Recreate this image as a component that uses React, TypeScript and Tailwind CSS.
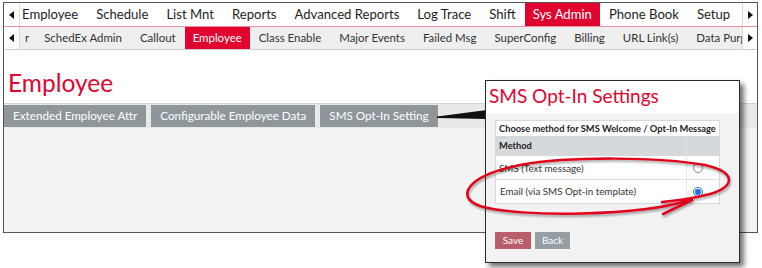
import React from "react";

const topItems = [
	"Employee",
	"Schedule",
	"List Mnt",
	"Reports",
	"Advanced Reports",
	"Log Trace",
	"Shift",
	"Sys Admin",
	"Phone Book",
	"Setup",
];

const subItems = [
	"SchedEx Admin",
	"Callout",
	"Employee",
	"Class Enable",
	"Major Events",
	"Failed Msg",
	"SuperConfig",
	"Billing",
	"URL Link(s)",
	"Data Purge",
];

function LeftArrow() {
	return (
		<span className="block h-0 w-0 border-y-[4px] border-y-transparent border-r-[5px] border-r-[#111]" />
	);
}

function RightArrow() {
	return (
		<span className="block h-0 w-0 border-y-[4px] border-y-transparent border-l-[5px] border-l-[#111]" />
	);
}

function Radio({ checked }: { checked?: boolean }) {
	if (checked) {
		return (
			<span className="flex h-[10px] w-[10px] items-center justify-center rounded-full border border-[#1f6fe5] bg-white">
				<span className="h-[6px] w-[6px] rounded-full bg-[#1f6fe5]" />
			</span>
		);
	}
	return (
		<span className="block h-[10px] w-[10px] rounded-full border border-[#8a8a8a] bg-white" />
	);
}

function SmsOptInDialog() {
	return (
		<div className="absolute left-[485px] top-[80px] flex h-[183px] w-[255px] flex-col border border-[#2b2b2b] bg-[#f2f2f2] shadow-[4px_4px_5px_rgba(0,0,0,0.55)]">
			<div className="h-[32px] bg-white px-[3px] pt-[3px] text-[19px] leading-[24px] text-[#e1042f]">
				SMS Opt-In Settings
			</div>
			<div className="px-[9px] pt-[7px]">
				<div className="w-[225px] border border-[#d8d8d8] bg-white text-[9.3px] text-[#222]">
					<div className="h-[15px] pl-[3px] font-bold leading-[15px]">
						Choose method for SMS Welcome / Opt-In Message
					</div>
					<div className="flex h-[20px] bg-[#d6d9db] font-bold leading-[20px]">
						<div className="flex-1 border-r border-[#e4e4e4] pl-[3px]">Method</div>
						<div className="w-[32px]" />
					</div>
					<div className="flex h-[24px] border-b border-[#dedede] text-[9.8px] leading-[24px] text-[#333]">
						<div className="flex-1 border-r border-[#e4e4e4] pl-[3px]">SMS (Text message)</div>
						<div className="flex w-[32px] items-center pl-[6px]">
							<Radio />
						</div>
					</div>
					<div className="flex h-[23px] text-[9.8px] leading-[23px] text-[#333]">
						<div className="flex-1 border-r border-[#e4e4e4] pl-[4px]">
							Email (via SMS Opt-in template)
						</div>
						<div className="flex w-[32px] items-center pl-[6px]">
							<Radio checked />
						</div>
					</div>
				</div>
				<div className="mt-[28px] flex gap-[4px] text-[10px] leading-[17px] text-white">
					<button className="h-[17px] w-[36px] bg-[#b95d6c]">Save</button>
					<button className="h-[17px] w-[35px] bg-[#979ea3]">Back</button>
				</div>
			</div>
		</div>
	);
}

export default function App() {
	return (
		<div className="relative h-[268px] w-[762px] overflow-hidden bg-white [font-family:Lato,sans-serif]">
			<div className="ml-[3px] mt-[2px] flex h-[231px] w-[755px] flex-col border border-[#555]">
				{/* main menu */}
				<div className="flex h-[24px] shrink-0 border-b border-[#ea8f9b] bg-white text-[13.1px] text-[#1e1e1e]">
					<div className="flex w-[16px] shrink-0 items-center justify-center border-r border-[#d9d9d9]">
						<LeftArrow />
					</div>
					<div className="flex min-w-0 flex-1 overflow-hidden">
						<div className="-ml-[7px] flex shrink-0 whitespace-nowrap">
							{topItems.map((item) => (
								<div
									key={item}
									className={
										item === "Sys Admin"
											? "-mb-px flex items-center bg-[#e1042f] px-[8px] text-white"
											: "flex items-center px-[9px]"
									}
								>
									{item}
								</div>
							))}
						</div>
					</div>
					<div className="flex w-[15px] shrink-0 items-center justify-center border-l border-[#d9d9d9]">
						<RightArrow />
					</div>
				</div>

				{/* sub menu */}
				<div className="flex h-[23px] shrink-0 border-b border-[#cfcfcf] bg-[#efefef] text-[11.45px] text-[#333]">
					<div className="flex w-[16px] shrink-0 items-center justify-center border-r border-[#d9d9d9] bg-white">
						<LeftArrow />
					</div>
					<div className="flex min-w-0 flex-1 overflow-hidden">
						<div className="flex shrink-0 whitespace-nowrap">
							<div className="flex items-center pl-[5px] pr-[6px]">r</div>
							{subItems.map((item) => (
								<div
									key={item}
									className={
										item === "Employee"
											? "flex items-center bg-[#e1042f] px-[8px] text-white"
											: "flex items-center px-[9px]"
									}
								>
									{item}
								</div>
							))}
						</div>
					</div>
					<div className="flex w-[15px] shrink-0 items-center justify-center border-l border-[#d9d9d9] bg-white">
						<RightArrow />
					</div>
				</div>

				{/* page */}
				<div className="bg-white pb-[6px] pl-[4px] pt-[19px] text-[24.5px] leading-[28px] text-[#e1042f]">
					Employee
				</div>
				<div className="flex h-[25px] shrink-0 gap-[5px] border-t border-[#d2d2d2] bg-[#e9e9e9] pt-[1px] text-[11.7px] text-white">
					<div className="flex h-[22px] items-center bg-[#8e9699] px-[9px]">Extended Employee Attr</div>
					<div className="flex h-[22px] items-center bg-[#8e9699] px-[9px]">Configurable Employee Data</div>
					<div className="flex h-[22px] items-center bg-[#8e9699] px-[9px]">SMS Opt-In Setting</div>
				</div>
				<div className="flex-1 bg-[#f3f3f3]" />
			</div>

			{/* callout pointer */}
			<svg className="pointer-events-none absolute left-0 top-0" width="762" height="268">
				<polygon points="437,116.5 437,118 487,119 487,110" fill="#111" />
			</svg>

			<SmsOptInDialog />

			{/* hand-drawn annotation */}
			<svg
				className="pointer-events-none absolute left-0 top-0 [filter:drop-shadow(1px_2px_1px_rgba(0,0,0,0.35))]"
				width="762"
				height="268"
			>
				<path
					d="M 690 200 C 640 216 520 218 480 206 C 455 197 466 176 520 165 C 570 156 660 157 705 165 C 736 172 736 186 710 194 C 690 199 675 201 662 202"
					fill="none"
					stroke="#e3001b"
					strokeWidth="2.5"
					strokeLinecap="round"
				/>
				<path d="M 663 214 L 692 200" fill="none" stroke="#e3001b" strokeWidth="2.5" strokeLinecap="round" />
			</svg>
		</div>
	);
}
